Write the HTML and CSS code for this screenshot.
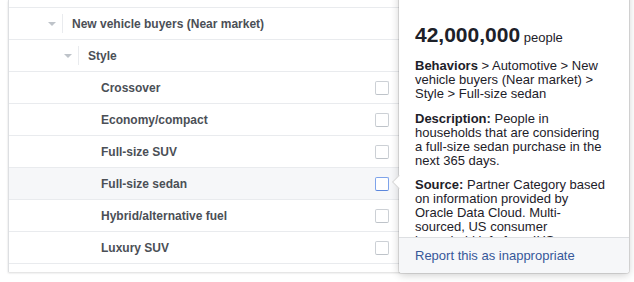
FILE: index.html
```html
<!DOCTYPE html>
<html lang="en">
<head>
    <meta charset="UTF-8">
    <meta name="viewport" content="width=device-width, initial-scale=1.0">
    <title>Detailed targeting - Behaviors</title>
    <link rel="stylesheet" href="styles.css">
</head>
<body>
    <div class="page">
        <div class="tree">
            <div class="row edge-top"></div>
            <div class="row group level-1">
                <span class="caret"></span>
                <span class="divider"></span>
                <span class="label">New vehicle buyers (Near market)</span>
            </div>
            <div class="row group level-2">
                <span class="caret"></span>
                <span class="divider"></span>
                <span class="label">Style</span>
            </div>
            <div class="row leaf">
                <span class="label">Crossover</span>
                <span class="check"></span>
            </div>
            <div class="row leaf">
                <span class="label">Economy/compact</span>
                <span class="check"></span>
            </div>
            <div class="row leaf">
                <span class="label">Full-size SUV</span>
                <span class="check"></span>
            </div>
            <div class="row leaf active">
                <span class="label">Full-size sedan</span>
                <span class="check"></span>
            </div>
            <div class="row leaf">
                <span class="label">Hybrid/alternative fuel</span>
                <span class="check"></span>
            </div>
            <div class="row leaf">
                <span class="label">Luxury SUV</span>
                <span class="check"></span>
            </div>
            <div class="row edge-bottom"></div>
        </div>

        <!-- hover card for the active row -->
        <div class="tooltip">
            <div class="tooltip-body">
                <div class="size"><strong>42,000,000</strong> people</div>
                <p><strong>Behaviors</strong> &gt; Automotive &gt; New vehicle buyers (Near market) &gt; Style &gt; Full-size sedan</p>
                <p><strong>Description:</strong> People in households that are considering a full-size sedan purchase in the next 365 days.</p>
                <p><strong>Source:</strong> Partner Category based on information provided by Oracle Data Cloud. Multi-sourced, US consumer household info from IHS Automotive.</p>
            </div>
            <div class="tooltip-footer">
                <a href="#">Report this as inappropriate</a>
            </div>
        </div>
    </div>
</body>
</html>
```

FILE: styles.css
```css
body {
    margin: 0;
    background-color: #fff;
    font-family: "Liberation Sans", Arial, sans-serif;
    font-size: 12px;
    color: #1d2129;
}

.page {
    position: relative;
    height: 282px;
    overflow: hidden;
}

.tree {
    width: 392px;
    margin-left: 8px;
    background-color: #fff;
    border-left: 1px solid #dddfe2;
    box-shadow: 0 1px 2px rgba(0, 0, 0, 0.15);
}

.row {
    display: flex;
    align-items: center;
    height: 31px;
    border-bottom: 1px solid #e9ebee;
    padding-right: 12px;
}

.row.edge-top {
    height: 7px;
}

.row.edge-bottom {
    height: 8px;
    border-bottom: none;
}

.row.active {
    background-color: #f6f7f9;
}

.label {
    flex: 1;
    font-weight: bold;
    color: #4b4f56;
}

.caret {
    width: 0;
    height: 0;
    border-left: 4px solid transparent;
    border-right: 4px solid transparent;
    border-top: 4px solid #bec3c9;
}

.divider {
    width: 1px;
    height: 19px;
    margin: 0 9px 0 6px;
    background-color: #e9ebee;
}

.level-1 {
    padding-left: 39px;
}

.level-2 {
    padding-left: 55px;
}

.leaf {
    padding-left: 92px;
}

.check {
    width: 12px;
    height: 12px;
    border: 1px solid #ccd0d5;
    border-bottom-color: #bec3c9;
    border-radius: 2px;
    background-color: #fff;
}

.active .check {
    border-color: #7ea3ea;
    border-bottom-color: #5b86dc;
}

.tooltip {
    position: absolute;
    left: 399px;
    top: -10px;
    width: 230px;
    font-size: 13px;
    background-color: #fff;
    border-radius: 3px;
    box-shadow: 0 0 0 1px rgba(0, 0, 0, 0.1), 0 2px 8px rgba(0, 0, 0, 0.2);
}

.tooltip::before {
    content: "";
    position: absolute;
    left: -5px;
    top: 187px;
    width: 9px;
    height: 9px;
    background-color: #fff;
    border-left: 1px solid rgba(0, 0, 0, 0.15);
    border-bottom: 1px solid rgba(0, 0, 0, 0.15);
    transform: rotate(45deg);
}

.tooltip-body {
    position: relative;
    height: 247px;
    overflow: hidden;
    box-sizing: border-box;
    padding: 33px 22px 0 16px;
}

.size {
    line-height: 24px;
    margin-bottom: 9px;
}

.size strong {
    font-size: 21px;
}

.tooltip-body p {
    margin: 0 0 10.5px;
    line-height: 14px;
}

.tooltip-footer {
    height: 35px;
    line-height: 35px;
    padding-left: 16px;
    border-top: 1px solid #dddfe2;
    background-color: #f6f7f9;
    border-radius: 0 0 3px 3px;
}

.tooltip-footer a {
    color: #365899;
    text-decoration: none;
}
```
